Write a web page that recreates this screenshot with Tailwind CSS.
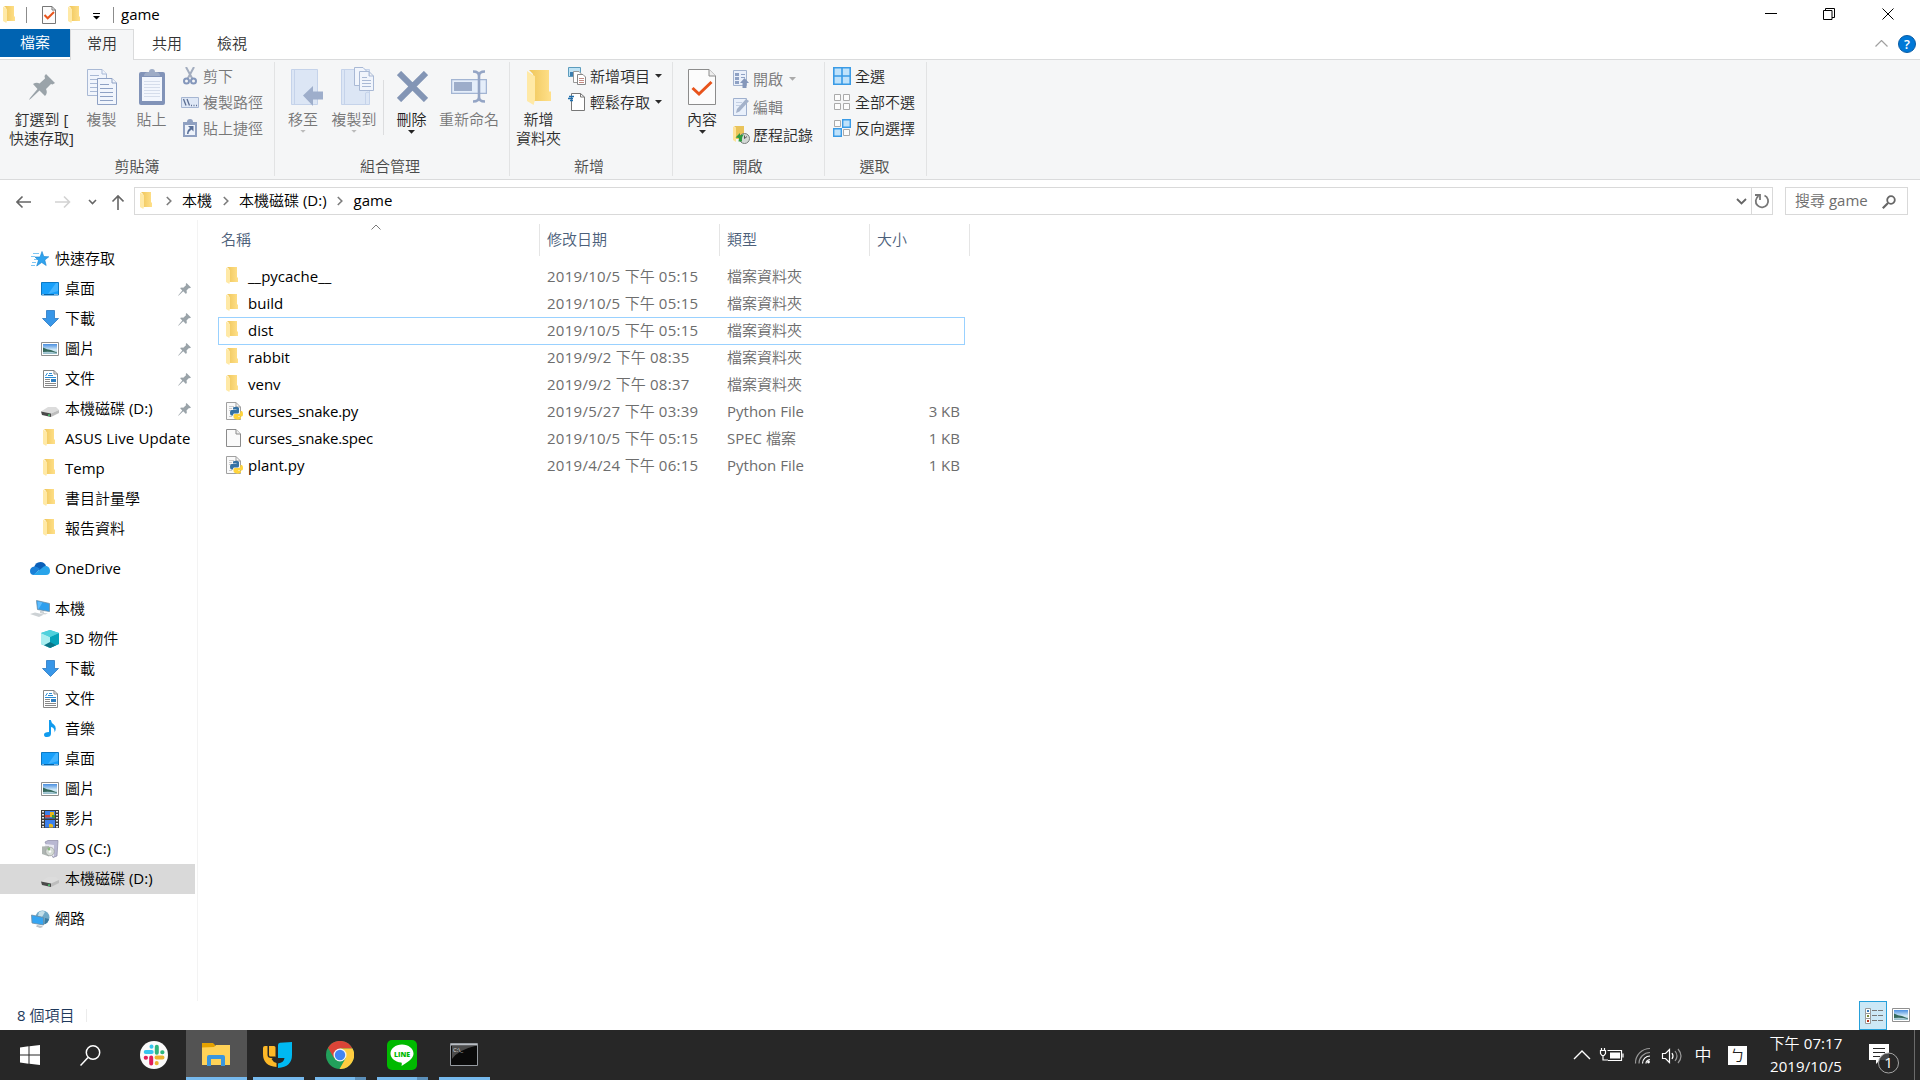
<!DOCTYPE html>
<html lang="zh-Hant">
<head>
    <meta charset="UTF-8">
    <meta name="viewport" content="width=device-width, initial-scale=1.0">
    <title>game</title>
    <script src="https://cdn.jsdelivr.net/npm/@tailwindcss/browser@4"></script>
</head>
<body class="w-[1920px] h-[1080px] overflow-hidden flex flex-col bg-white text-[15px] leading-5 text-black whitespace-nowrap font-['Open_Sans','Noto_Sans_CJK_TC_DemiLight','Noto_Sans_CJK_TC_Light','Noto_Sans_CJK_TC',sans-serif]">

    <!-- Icon sprites -->
    <svg class="absolute size-0">
        <linearGradient id="gFolder" x1="0" x2="1" y1="0" y2="0"><stop offset="0" stop-color="#efc65a"/><stop offset="1" stop-color="#ffe08a"/></linearGradient>
        <linearGradient id="gSky" x1="0" x2="0" y1="0" y2="1"><stop offset="0" stop-color="#4a8fe0"/><stop offset=".6" stop-color="#d5ecf8"/><stop offset="1" stop-color="#8fb8c4"/></linearGradient>
        <symbol id="folder" viewBox="0 0 12 17" preserveAspectRatio="none"><path fill="url(#gFolder)" d="M1 0h10v10.500h1V15H3V2z"/><path fill="#ffe9a6" d="M0 .5 4 3v11.500L3.300 17 0 15z"/></symbol>
        <symbol id="check" viewBox="0 0 28 36"><path fill="#fcfcfc" stroke="#8c8c8c" d="M.5.500h20.500l6.500 6.500v28.500H.5z"/><path fill="#eee" stroke="#8c8c8c" d="M21 .5V7h6.500"/><path fill="none" stroke="#e8541c" stroke-width="3" d="m4.500 19 6.500 6L23.500 13"/></symbol>
        <symbol id="checkSmall" viewBox="0 0 14 18"><path fill="#fcfcfc" stroke="#777" d="M.5.500H10L13.500 4v13.500H.5z"/><path fill="none" stroke="#777" d="M10 .5V4h3.500"/><path fill="none" stroke="#e8541c" stroke-width="2" d="m2.500 9 3.200 3.300L12 6"/></symbol>
        <symbol id="pin" viewBox="0 0 26 26"><path fill="#9aa3a9" d="M17 0l9 9-2.500 1.500-1.500-.5-5 5q2 4-1 7l-5.500-5.500L2 24.500 0 26l1-2 7.500-9-4.500-5q3.500-2 6.500-.5l5.500-5-.5-2.500z"/></symbol>
        <symbol id="copy" viewBox="0 0 30 36"><g fill="#f1f5fc" stroke="#a9b9d5"><path d="M.5.500H15l4.500 4.500v21.500H.5z"/><path d="M15 .5V5h4.500M3 6.500h9M3 10.500h13M3 14.500h13M3 18.500h13M3 22.500h13"/><path stroke="#8ea1c4" d="M10.500 9.500H25l4.500 4.500v21.500h-19z"/><path stroke="#8ea1c4" d="M25 9.500V14h4.500M13 15.500h9M13 19.500h13M13 23.500h13M13 27.500h13M13 31.500h13"/></g></symbol>
        <symbol id="paste" viewBox="0 0 26 36"><rect y="3" width="26" height="33" rx="2" fill="#8193b8"/><path fill="#f2f6fd" d="M3 8h20v24H3z"/><path stroke="#d5ddeb" d="M5 12.500h16M5 15.500h16M5 18.500h16M5 21.500h16M5 24.500h16M5 27.500h16"/><path fill="#9eacc6" d="M5 7q0-4 5-4 0-3 3-3t3 3q5 0 5 4z"/></symbol>
        <symbol id="cut" viewBox="0 0 14 18"><path fill="none" stroke="#a3adbf" stroke-width="2" d="M3 0 9.500 12M11 0 4.500 12"/><g fill="none" stroke="#8497bb" stroke-width="2"><circle cx="3.500" cy="14" r="2.500"/><circle cx="10.500" cy="14" r="2.500"/></g></symbol>
        <symbol id="path" viewBox="0 0 18 11"><path fill="#dfe8f6" stroke="#a6b6d2" d="M.5.500h17v10H.5z"/><path stroke="#5c6e92" stroke-width="1.300" d="m2.500 2 2.500 6.500M6 2l2.500 6.500M10 8.500h1M12.500 8.500h1M15 8.500h1"/></symbol>
        <symbol id="pasteLink" viewBox="0 0 14 18"><path fill="#8fa0c1" d="M0 3h4q0-3 3-3t3 3h4v15H0z"/><path fill="#eef3fb" d="M2 6h10v10H2z"/><path fill="#5a7099" d="M5 7h5.500v5.500l-2-2q-3 2-3 4.500h-1.500q0-4 3-6z"/></symbol>
        <symbol id="moveTo" viewBox="0 0 32 37"><path fill="#dce6f5" stroke="#c5d3ea" d="M.5.500h26v35H.5z"/><path stroke="#c5d3ea" d="M3.500 1v35"/><path fill="#9eaecb" d="M12 26.500 22 17v5.500h10v8H22V37z"/></symbol>
        <symbol id="copyTo" viewBox="0 0 33 38"><path fill="#dce6f5" stroke="#c5d3ea" d="M.5 2.500h28v35H.5z"/><path fill="none" stroke="#c5d3ea" d="M3.500 3v34M24.500 37V26q3-2 4 0"/><g fill="#f1f5fc" stroke="#a9b9d5"><path d="M13.500.500H22l4 4v14H13.500z"/><path d="M18.500 4.500H28l4.500 4.500v14.500h-14zM28 4.500V9h4.500M21 10.500h5M21 13.500h9M21 16.500h9M21 19.500h9"/></g></symbol>
        <symbol id="delete" viewBox="0 0 31 31"><path stroke="#8395b5" stroke-width="6" d="m2 2 27 27M29 2 2 29"/></symbol>
        <symbol id="rename" viewBox="0 0 36 33"><path fill="#e5eefa" stroke="#a3b5d3" stroke-width="1.300" d="M.6 9.600h34.800v13.800H.6z"/><path fill="#9dadca" d="M3 12h18v9H3z"/><path fill="none" stroke="#94a5c5" stroke-width="2.600" d="M22 1.500q6 0 6 4.500v21q0 4.500-6 4.500M34 1.500q-6 0-6 4.500v21q0 4.500 6 4.500"/></symbol>
        <symbol id="newItem" viewBox="0 0 18 18"><path fill="#bfe3f5" stroke="#5c9cbd" d="M.5.500h12v9H.5z"/><path fill="#3c7fb0" d="M2 5h5v4H2z"/><path fill="#fff" stroke="#999" d="M5.500 4.500H11l2 2v9H5.500z"/><path fill="#fff" stroke="#888" d="M9.500 7.500H15l2.500 2.500v7.500h-8z"/><path stroke="#c38b83" d="M11 11.500h5M11 13.500h5M11 15.500h5"/></symbol>
        <symbol id="easyAccess" viewBox="0 0 17 18"><path fill="#fff" stroke="#777" d="M3.500.500h9L16.500 4v13.500h-13z"/><path fill="none" stroke="#777" d="M12.500.500V4h4"/><path fill="none" stroke="#1e6fae" stroke-width="1.300" d="M1 3.500h5M0 5.500h5M2 7.500h3"/></symbol>
        <symbol id="open" viewBox="0 0 16 18"><path fill="#eaf0fa" stroke="#a3b3ce" d="M.5.500h13v15H.5z"/><path fill="#8ea1c4" d="M2 3h4v3H2zM2 7h4v3H2zM2 11h4v3H2zM8 4h4v1H8zM8 7h4v1H8z"/><path fill="#8597ba" d="m11.500 8 4.500 5h-2.500v5h-4v-5H7z"/></symbol>
        <symbol id="edit" viewBox="0 0 16 18"><path fill="#e9f0fb" stroke="#9fb0ce" d="M.5.500h13v17H.5z"/><path fill="#a4b2ca" d="M3 15 4 11 13 1l3 2L6.500 13.500z"/><path stroke="#c3cfe3" d="M3 4.500h6M3 7.500h4"/></symbol>
        <symbol id="history" viewBox="0 0 17 18"><path fill="#e9c35a" d="M1 0h10v13H3V2z"/><path fill="#ffe398" d="M0 .5 3 2v14l-3-2z"/><circle cx="11.500" cy="12.500" r="5" fill="#d3d8d5" stroke="#777d7b"/><path fill="none" stroke="#555" d="M11.500 9.500v3l2.500-2"/><path fill="#2e9c3f" d="M2.500 11.500 7 7v2.500q2.500-1.500 4-1-2.500 2-2 7H5.500l.5-3.500z"/></symbol>
        <symbol id="selAll" viewBox="0 0 18 18"><path fill="#bfe2fb" stroke="#3a9be6" stroke-width="1.600" d="M.8.800h16.400v16.400H.8zM9 1v16M1 9h16"/></symbol>
        <symbol id="selNone" viewBox="0 0 18 18"><path fill="#fcfcfc" stroke="#aaa" d="M1.500 1.500h6v6h-6zM10.500 1.500h6v6h-6zM1.500 10.500h6v6h-6zM10.500 10.500h6v6h-6z"/></symbol>
        <symbol id="selInv" viewBox="0 0 18 18"><path fill="#fcfcfc" stroke="#aaa" d="M1.500 1.500h6v6h-6zM10.500 10.500h6v6h-6z"/><path fill="#bfe2fb" stroke="#3a9be6" stroke-width="1.400" d="M9.700.700h7.600v7.600H9.700zM.7 9.700h7.600v7.600H.7z"/></symbol>
        <symbol id="star" viewBox="0 0 18 16"><path stroke="#7ec6f3" d="M2 2.500h6M0 5.500h4M3 8.500h3M1 11.500h4M0 14.500h4"/><path fill="#2fa3ee" stroke="#1a83cf" stroke-width=".6" d="m11 .5 1.800 5 5 .3-4 3.200 1.400 5.500-4.500-3-5 3.500 1.700-5.500L4 6h5z"/></symbol>
        <symbol id="desktop" viewBox="0 0 18 14"><path fill="#18a0fb" stroke="#0b79c5" d="M.5.500h17v12.500H.5z"/><path fill="#43b4ff" d="M17 1v8L7 12 15 1z"/><path stroke="#0763a5" d="M1 12.500h16"/><path stroke="#fff" d="M1.500 12.500h1M13.500 12.500h1M15.500 12.500h1"/></symbol>
        <symbol id="down" viewBox="0 0 17 17"><path fill="#3796e8" stroke="#2a78c2" stroke-width=".8" d="M4.500.500h8v8h4L8.500 16.500.5 8.500h4z"/></symbol>
        <symbol id="picture" viewBox="0 0 18 14"><path fill="#fff" stroke="#8f8f8f" d="M.5.500h17v13H.5z"/><path fill="url(#gSky)" d="M2 2h14v10H2z"/><path fill="#35695d" d="M2 5.500q4 2 8 2.500 3 1 6 2.500v.5q-7-2-14-1z"/></symbol>
        <symbol id="doc" viewBox="0 0 15 18"><path fill="#fff" stroke="#878787" d="M.5.500H11L14.500 4v13.500H.5z"/><path fill="none" stroke="#878787" d="M11 .5V4h3.500"/><path stroke="#2a8bd3" d="M4.500 3 2.500 6M6 3.500h3M5 5.500h5M2 7.500h11"/><path stroke="#888" d="M2 9.500h5M2 11.500h5M2 13.500h11M2 15.500h11"/><path fill="#2e7fc0" d="M8 9h5v3H8z"/></symbol>
        <symbol id="drive" viewBox="0 0 18 10"><path fill="#dcdcdc" d="M0 4.500 7 0h8l3 3-8 3.500z"/><path fill="#4a4a4a" d="M0 4.500 10 6.500V10L1 8z"/><path fill="#bdbdbd" d="M10 6.500 18 3v3l-8 4z"/><path fill="#4be07a" d="M7 7.500h2v1.300H7z"/></symbol>
        <symbol id="cloud" viewBox="0 0 20 13"><path fill="#0a5fb8" d="M4 6q1-6 6.500-6 4 0 5.500 4l-6 5z"/><path fill="#1a7fd6" d="M0 9q0-4 4.500-4.500Q7 4 10 7l-6 6Q0 13 0 9z"/><path fill="#28a4ea" d="m3 13 9-7q2-2.500 4.500-2 3.500 1 3.500 5 0 4-4 4z"/></symbol>
        <symbol id="pc" viewBox="0 0 20 17"><path fill="#2d9fee" stroke="#6d8da3" stroke-width=".8" d="m6.500.5 13 3v8l-12-2z"/><path fill="#5bbcff" d="m7.500 1.500 5 1-4 6.500-.5-.2z"/><path fill="#cdd2d5" d="m0 14 5-1.500 9 2L9 17zM10 10.500l4 1v1.500l4 .5-3 1-5-1.500z"/></symbol>
        <symbol id="cube" viewBox="0 0 18 18"><path fill="#3cc6d8" d="m9 0 9 3v11l-9 4-9-4V3z"/><path fill="#a9eef0" d="m0 3 9 4v11l-9-4z"/><path fill="#07a3b9" d="m18 3-9 4v11l9-4z"/><path fill="#4fd1dc" d="m9 0 9 3-9 4-9-4z"/><path fill="#0b7587" d="m9 12 6 3.300L9 18l-6-2.700z"/></symbol>
        <symbol id="music" viewBox="0 0 12 18"><path fill="#119bee" d="M5 0h1.800q.5 3 3 4.500 3.500 3 .7 8 .5-4.500-3.500-5.500v6.500q0 3.500-4 3.500-3 0-3-2.300Q0 12 5 12z"/></symbol>
        <symbol id="film" viewBox="0 0 18 18"><path fill="#3b3b3b" d="M0 0h18v18H0z"/><path stroke="#e8e8e8" stroke-width="2" stroke-dasharray="1.500 1.500" d="M2 1v17M16 1v17"/><path fill="#3c80ec" d="M4 1h10v7.500H4zM4 10h10v7.500H4z"/><path fill="#e9b91a" d="M9 2h4v5H9zM8 14q2-1 4 1v2.500H8z"/><path fill="#d2463a" d="M4 5h5v2.500H4z"/><path fill="#3f9440" d="M11 5h3v3h-3z"/></symbol>
        <symbol id="osdisk" viewBox="0 0 17 18"><path fill="#b9b8d2" stroke="#8b8aa5" stroke-width=".7" d="M3 2 6 .5h10l-1 15.500-4 1.500z"/><path fill="#e9e9f3" d="m3 4 9 1v11.500L3 14z"/><path fill="#aeb5b2" d="M0 6.500 7 6v10.500L0 14z"/><circle cx="8" cy="11.500" r="4.300" fill="#d5dcd6" stroke="#999" stroke-width=".7"/><path fill="#86b77b" d="M8 11.500 5 9q2-2 3-1.800z"/><circle cx="8" cy="11.500" r="1.200" fill="#fff"/></symbol>
        <symbol id="network" viewBox="0 0 19 18"><circle cx="11.500" cy="7.500" r="7" fill="#6fa9c7"/><path fill="#c3dfe9" d="M8 2q4-2 6 0l-3 5-4-1z"/><path fill="#3b7ba0" d="m14 8 4 1q-1 4-4.500 5.500z"/><path fill="#35a5f2" stroke="#6d8da3" stroke-width=".8" d="m.5 5 12 2.500v7.500L1 13z"/><path fill="#bcc3c8" d="m6 15 5 1 1 1-3 1-4-1.500z"/></symbol>
        <symbol id="file" viewBox="0 0 15 18"><path fill="#fafafa" stroke="#8b8b8b" d="M.5.500H10L14.500 5v12.500H.5z"/><path fill="#eee" stroke="#8b8b8b" d="M10 .5V5h4.500"/></symbol>
        <symbol id="py" viewBox="0 0 17 18"><path fill="#fafafa" stroke="#a0a0a0" d="M.5.500H10L14.500 5v12.500H.5z"/><path fill="none" stroke="#a0a0a0" d="M10 .5V5h4.500"/><path stroke="#ccc" d="M3 4.500h5M3 6.500h3M3 8.500h2M3 14.500h3"/><path fill="#3672a4" d="M7 5.500q4-1.500 6 .5v4q0 1.500-1.500 1.500H8q-1 0-1 2H5.500q-1.500 0-1.500-3T6 8h4.500v-.5H7z"/><path fill="#ffd43b" d="M14.500 9H16q1 1 1 3t-1 2.500h-4v.5h3v1.500q-2 2-6 .5-1.500-.5-1.500-2V13q.5-1 1.500-1h3.500q2 0 2-2z"/></symbol>
        <symbol id="caret" viewBox="0 0 7 4"><path fill="currentColor" d="M0 0h7L3.500 3.700z"/></symbol>
        <symbol id="chev" viewBox="0 0 6 10"><path fill="none" stroke="#7d7d7d" stroke-width="1.600" d="m.8 1 4 4-4 4"/></symbol>
    </svg>

    <!-- Title bar -->
    <header class="h-[29px] flex items-start justify-between shrink-0">
        <div class="flex h-[29px] items-center pl-[3px]">
            <svg class="w-3 h-[17px] -mt-px"><use href="#folder"/></svg>
            <i class="w-px h-4 bg-[#8c8c8c] ml-[11px]"></i>
            <svg class="w-[14px] h-[18px] ml-[15px]"><use href="#checkSmall"/></svg>
            <svg class="w-3 h-[17px] ml-3"><use href="#folder"/></svg>
            <svg class="w-[7px] h-[7px] ml-[13px] mt-[3px]" viewBox="0 0 7 7"><path d="M0 0h7v1H0zM0 3h7L3.500 6.500z"/></svg>
            <i class="w-px h-4 bg-[#8c8c8c] ml-[13px]"></i>
            <span class="ml-[7px] pb-0.5">game</span>
        </div>
        <svg class="w-[145px] h-[29px] mr-[10px]" viewBox="0 0 145 29" fill="none" stroke="#000"><path d="M0 13.500h12M58.500 10.500h8.500v9h-8.500zM60.500 10V8.500h9v9H67M117.500 8.500l11 11M128.500 8.500l-11 11"/></svg>
    </header>

    <!-- Ribbon tabs -->
    <nav class="h-[30px] flex shrink-0 text-[#333]">
        <div class="w-[70px] h-7 bg-[#0063b1] text-white text-center leading-[27px]">檔案</div>
        <div class="w-16 h-[31px] relative border border-b-0 border-[#dadbdc] bg-[#f5f6f7] text-center leading-[26px]">常用</div>
        <div class="w-[66px] text-center leading-7">共用</div>
        <div class="w-[64px] text-center leading-7">檢視</div>
        <div class="ml-auto flex items-center mr-1 -mt-px">
            <svg class="w-[13px] h-[7px] mr-[10px]" viewBox="0 0 13 7"><path fill="none" stroke="#a0a0a0" stroke-width="1.200" d="M.5 6.500l6-6 6 6"/></svg>
            <span class="size-[18px] rounded-full bg-[#0078d7] border border-[#0a5ca5] text-white text-[13px] font-semibold leading-4 text-center">?</span>
        </div>
    </nav>

    <!-- Ribbon -->
    <section class="h-[121px] shrink-0 flex bg-[#f5f6f7] border-y border-[#dadbdc] text-[#2b2b2b] leading-[19px] pb-[3px] pt-0.5">
        <div class="w-[275px] border-r border-[#e2e3e4] flex flex-col">
            <div class="flex h-[95px] pt-[7px]">
                <div class="w-[81px] flex flex-col items-center text-center">
                    <div class="h-9 flex items-center pl-[3px]"><svg class="size-[26px]"><use href="#pin"/></svg></div>
                    <div class="mt-[5px] pl-0.5">釘選到 [<br>快速存取]</div>
                </div>
                <div class="w-[41px] flex flex-col items-center text-[#777]"><svg class="w-[30px] h-9"><use href="#copy"/></svg><div class="mt-[5px]">複製</div></div>
                <div class="w-[59px] flex flex-col items-center text-[#777]"><svg class="w-[26px] h-9"><use href="#paste"/></svg><div class="mt-[5px]">貼上</div></div>
                <div class="-mt-[6px] text-[#777] flex flex-col">
                    <div class="flex items-center h-[26px]"><svg class="w-[14px] h-[18px] ml-0.5 mr-[6px]"><use href="#cut"/></svg>剪下</div>
                    <div class="flex items-center h-[26px]"><svg class="w-[18px] h-[11px] mr-1"><use href="#path"/></svg>複製路徑</div>
                    <div class="flex items-center h-[26px]"><svg class="w-[14px] h-[18px] ml-0.5 mr-[6px]"><use href="#pasteLink"/></svg>貼上捷徑</div>
                </div>
            </div>
            <div class="text-center text-[#4b4b4b]">剪貼簿</div>
        </div>

        <div class="w-[235px] border-r border-[#e2e3e4] flex flex-col">
            <div class="flex h-[95px] pt-[7px] pl-2 text-[#777]">
                <div class="w-10 flex flex-col items-center"><svg class="w-8 h-[37px] ml-2"><use href="#moveTo"/></svg><div class="mt-1">移至</div><svg class="w-[6px] h-[3px] mt-px text-[#bbb]"><use href="#caret"/></svg></div>
                <div class="w-[60px] flex flex-col items-center pl-0.5"><svg class="w-[33px] h-[38px] -mt-0.5 ml-[6px]"><use href="#copyTo"/></svg><div class="mt-[5px]">複製到</div><svg class="w-[6px] h-[3px] mt-px text-[#bbb]"><use href="#caret"/></svg></div>
                <i class="w-px h-[55px] bg-[#dcdddf] mt-[11px]"></i>
                <div class="w-[55px] flex flex-col items-center text-[#222]"><svg class="size-[31px] mt-0.5 ml-0.5"><use href="#delete"/></svg><div class="mt-2">刪除</div><svg class="w-[7px] h-[4px] mt-px"><use href="#caret"/></svg></div>
                <div class="w-[60px] flex flex-col items-center"><svg class="w-9 h-[33px] mt-px"><use href="#rename"/></svg><div class="mt-[7px]">重新命名</div></div>
            </div>
            <div class="text-center text-[#4b4b4b] pr-1">組合管理</div>
        </div>

        <div class="w-[163px] border-r border-[#e2e3e4] flex flex-col">
            <div class="flex h-[95px] pt-[7px]">
                <div class="w-[57px] flex flex-col items-center text-center"><svg class="w-6 h-[35px] mt-px"><use href="#folder"/></svg><div class="mt-[5px]">新增<br>資料夾</div></div>
                <div class="-mt-[6px] ml-px">
                    <div class="flex items-center h-[26px]"><svg class="size-[18px] mr-1"><use href="#newItem"/></svg>新增項目<svg class="w-[7px] h-[4px] ml-[5px]"><use href="#caret"/></svg></div>
                    <div class="flex items-center h-[26px]"><svg class="w-[17px] h-[18px] mr-[5px]"><use href="#easyAccess"/></svg>輕鬆存取<svg class="w-[7px] h-[4px] ml-[5px]"><use href="#caret"/></svg></div>
                </div>
            </div>
            <div class="text-center text-[#4b4b4b] pr-1">新增</div>
        </div>

        <div class="w-[152px] border-r border-[#e2e3e4] flex flex-col">
            <div class="flex h-[95px] pt-[7px]">
                <div class="w-[58px] flex flex-col items-center"><svg class="w-7 h-9"><use href="#check"/></svg><div class="mt-[5px]">內容</div><svg class="w-[7px] h-[4px] mt-px"><use href="#caret"/></svg></div>
                <div class="-mt-1 ml-0.5">
                    <div class="flex items-center h-7 text-[#777]"><svg class="w-4 h-[18px] mr-1"><use href="#open"/></svg>開啟<svg class="w-[7px] h-[4px] ml-[6px] text-[#aaa]"><use href="#caret"/></svg></div>
                    <div class="flex items-center h-7 text-[#777]"><svg class="w-4 h-[18px] mr-1"><use href="#edit"/></svg>編輯</div>
                    <div class="flex items-center h-7"><svg class="w-[17px] h-[18px] mr-[3px]"><use href="#history"/></svg>歷程記錄</div>
                </div>
            </div>
            <div class="text-center text-[#4b4b4b] pr-0.5">開啟</div>
        </div>

        <div class="w-[102px] border-r border-[#e2e3e4] flex flex-col">
            <div class="h-[95px] pl-2 pt-px">
                <div class="flex items-center h-[26px]"><svg class="size-[18px] mr-1"><use href="#selAll"/></svg>全選</div>
                <div class="flex items-center h-[26px]"><svg class="size-[18px] mr-1"><use href="#selNone"/></svg>全部不選</div>
                <div class="flex items-center h-[26px]"><svg class="size-[18px] mr-1"><use href="#selInv"/></svg>反向選擇</div>
            </div>
            <div class="text-center text-[#4b4b4b] pr-0.5">選取</div>
        </div>
    </section>

    <!-- Address bar -->
    <section class="h-10 shrink-0 flex items-center pl-4 pr-3 pt-0.5">
        <svg class="w-[108px] h-5 mr-[10px] mt-0.5" viewBox="0 0 108 20" fill="none" stroke="#666" stroke-width="1.600"><path d="M1 10h14M6.500 4.500 1 10l5.500 5.500"/><path stroke="#d2d2d2" d="M39 10h14M48 4.500l5.500 5.500-5.500 5.500"/><path d="m73 8 3.500 3.500L80 8M102 18V4M96.500 9.500 102 4l5.500 5.500"/></svg>
        <div class="w-[1639px] h-7 flex items-center border border-[#d9d9d9] pl-[5px]">
            <svg class="w-3 h-[17px] -mt-0.5"><use href="#folder"/></svg>
            <svg class="w-[6px] h-[10px] ml-[14px]"><use href="#chev"/></svg><span class="ml-[10px] pb-0.5">本機</span>
            <svg class="w-[6px] h-[10px] ml-[11px]"><use href="#chev"/></svg><span class="ml-[10px] pb-0.5">本機磁碟 (D:)</span>
            <svg class="w-[6px] h-[10px] ml-[10px]"><use href="#chev"/></svg><span class="ml-[11px] pb-0.5">game</span>
            <svg class="w-[11px] h-[7px] ml-auto mr-1" viewBox="0 0 11 7"><path fill="none" stroke="#666" stroke-width="1.800" d="m1 1 4.500 4.500L10 1"/></svg>
            <div class="w-[21px] h-[26px] border-l border-[#d9d9d9] flex items-center justify-center">
                <svg class="size-4" viewBox="0 0 16 16" fill="none" stroke="#777" stroke-width="1.800"><path d="M10.500 2.500a6.200 6.200 0 1 1-6 .5M1 2h5v5"/></svg>
            </div>
        </div>
        <div class="ml-3 w-[123px] h-7 flex items-center border border-[#d9d9d9] pl-[9px] text-[#6d6d6d]">
            <span class="pb-0.5">搜尋 game</span>
            <svg class="size-[14px] ml-auto mr-[11px] mt-px" viewBox="0 0 14 14" fill="none" stroke="#666"><circle cx="9" cy="5" r="3.800" stroke-width="1.800"/><path stroke-width="2.200" d="M6 8 .8 13.200"/></svg>
        </div>
    </section>

    <main class="flex h-[781px] shrink-0">
        <aside id="tree" class="w-[198px] border-r border-[#f3f3f3] pt-6 shrink-0"></aside>
        <div class="pl-5 pt-1">
            <div class="w-[752px] grid grid-cols-[322px_180px_150px_100px] text-[#4c607a] h-8 leading-[30px] relative">
                <div class="pl-[3px] border-r border-[#e5e5e5]">名稱</div>
                <div class="pl-[7px] border-r border-[#e5e5e5]">修改日期</div>
                <div class="pl-[7px] border-r border-[#e5e5e5]">類型</div>
                <div class="pl-[7px] border-r border-[#e5e5e5]">大小</div>
                <svg class="absolute left-[153px] top-0 w-[10px] h-[6px]" viewBox="0 0 10 6"><path fill="none" stroke="#7a7a7a" d="m.5 5.500 4.500-4.500 4.500 4.500"/></svg>
            </div>
            <div id="files" class="pt-[7px]"></div>
        </div>
    </main>

    <!-- Status bar -->
    <footer class="h-[29px] shrink-0 flex items-center pl-[17px] text-[#1e395b]">
        <span class="pb-0.5">8 個項目</span>
        <i class="w-px h-[13px] bg-[#ececec] ml-3"></i>
        <div class="ml-auto w-7 h-[29px] bg-[#cce8f6] border border-[#26a0da] flex items-center justify-center pl-0.5">
            <svg class="w-[18px] h-4" viewBox="0 0 18 16"><path fill="#fff" stroke="#999" d="M.5.500h5v5h-5zM.5 5.500h5v5h-5zM.5 10.500h5v5h-5z"/><path fill="#3a78b8" d="M2 2h2v2H2z"/><path fill="#7a8a3a" d="M2 7h2v2H2z"/><path fill="#b8341c" d="M2 12h2v2H2z"/><path stroke="#777" d="M7 2.500h5M13 2.500h5M7 7.500h5M13 7.500h5M7 12.500h5M13 12.500h5"/></svg>
        </div>
        <svg class="w-[18px] h-[14px] ml-[5px] mr-[10px] -mt-0.5"><use href="#picture"/></svg>
    </footer>

    <!-- Taskbar -->
    <footer class="h-[50px] shrink-0 flex bg-[#272727] text-white">
        <div class="w-[62px] flex items-center justify-center"><svg class="size-5 ml-[-2px]" viewBox="0 0 20 20"><path fill="#fff" d="M0 2.500 8.500 1.300V9.500H0zM9.500 1.200 20 0v9.500H9.500zM0 10.500h8.500v8.200L0 17.500zM9.500 10.500H20V20L9.500 18.800z"/></svg></div>
        <div class="w-[62px] flex items-center justify-center"><svg class="size-[21px] ml-[-6px]" viewBox="0 0 21 21" fill="none" stroke="#fff" stroke-width="1.500"><circle cx="13" cy="7.500" r="6.700"/><path d="M8 12.500.5 20.500"/></svg></div>
        <div class="w-[62px] flex items-center justify-center">
            <svg class="size-7 -ml-0.5" viewBox="0 0 28 28"><circle cx="14" cy="14" r="14" fill="#fafafa"/><g stroke-width="4" stroke-linecap="round"><path stroke="#36c5f0" d="M5.700 11h6M11.500 5.500v.3"/><path stroke="#2eb67d" d="M16.800 5.700v6M22.200 11.200h.3"/><path stroke="#ecb22e" d="M16.500 16.500h6M16.700 22v.3"/><path stroke="#e01e5a" d="M11.200 16.500v6M5.700 16.700h.3"/></g></svg>
        </div>
        <div class="w-[61px] bg-[#535353] border-b-[3px] border-[#76b9ed] flex items-center justify-center pr-0.5">
            <svg class="w-7 h-[23px] mt-px" viewBox="0 0 28 23"><path fill="#e5a200" d="M0 0h11l2 2v3H0z"/><path fill="#ffd257" d="M0 4.500 12 4l2-2h14v20H0z"/><path fill="#3a96dd" d="M5 14q0-2 2-2h14q2 0 2 2v9h-4v-7H9v7H5z"/></svg>
        </div>
        <div class="w-[51px] ml-[6px] border-b-[3px] border-[#76b9ed] flex items-center justify-center pr-0.5">
            <svg class="w-[29px] h-[26px] mt-0.5" viewBox="0 0 29 26"><path fill="#fdb827" d="M2 4h9q1.500 0 1.500 1.500V15q-3.500 1-4 2 1.500 3 5 4v4Q0 24 0 12V6q0-2 2-2z"/><path fill="#272727" d="M4.500 4H6v9q0 1.500 1.500 1.500h5V16H8q-3.500 0-3.500-3z"/><path fill="#00b9f2" d="M15 3q0-2 2-2.200L29 0v13q0 12-14 13v-4.500q6-1 6.500-5.500H15z"/></svg>
        </div>
        <div class="w-[51px] ml-[11px] flex flex-col">
            <div class="h-[47px] flex items-center justify-center pr-0.5">
                <svg class="size-7 mt-0.5" viewBox="0 0 28 28"><circle cx="14" cy="14" r="14" fill="#22a05b"/><path fill="#db4437" d="M2 6.800a14 14 0 0 1 24.500.7H14L8 17z"/><path fill="#ffcd40" d="M14 7.500h12.500A14 14 0 0 1 13.500 28l6-10.500z"/><circle cx="14" cy="14" r="6.500" fill="#f4f4f4"/><circle cx="14" cy="14" r="5.200" fill="#4285f4"/></svg>
            </div>
            <div class="h-[3px] bg-[#5b8fb9] border-l-[40px] border-[#76b9ed]"></div>
        </div>
        <div class="w-[51px] ml-[11px] flex flex-col">
            <div class="h-[47px] flex items-center justify-center pr-0.5">
                <svg class="size-[30px] mt-[3px]" viewBox="0 0 30 30"><rect width="30" height="30" rx="5" fill="#00b900"/><path fill="#fff" d="M15 4.500c6.500 0 11.500 4 11.500 9 0 4-3 7-12 12.500.5-2 .5-3.500-.5-3.500C8 22 3.500 18 3.500 13.500c0-5 5-9 11.500-9z"/><text x="15" y="16.500" text-anchor="middle" font-size="7" font-weight="800" fill="#00b900">LINE</text></svg>
            </div>
            <div class="h-[3px] bg-[#5b8fb9] border-l-[40px] border-[#76b9ed]"></div>
        </div>
        <div class="w-[51px] ml-[11px] border-b-[3px] border-[#76b9ed] flex items-center justify-center pr-0.5">
            <svg class="w-7 h-[23px] mt-px" viewBox="0 0 28 23"><path fill="#0a0a0a" stroke="#969ba1" d="M.5.500h27v22H.5z"/><path fill="#b9bdc2" d="M1 1h26v1.500H1z"/><path fill="#4b4b4b" d="M2 3h23Q8 7 2 16z"/><text x="3" y="9" font-size="6" fill="#ddd">C:\_</text></svg>
        </div>

        <div class="ml-auto flex items-center">
            <svg class="w-[114px] h-6 mr-[11px] mt-0.5" viewBox="0 0 114 24" fill="none" stroke="#fff" stroke-width="1.200">
                <path d="m5 15 8-8 8 8" stroke-width="1.400"/>
                <path d="M38.500 6.500h14v10H39M54 9.500v4"/><path fill="#fff" stroke="none" d="M41 8.500h10v6H41z"/><path fill="#272727" d="M35.500 4v3M32.500 4v3M31.500 6.500h5v3l-1.500 2h-2l-1.500-2zM34 11.500v4.500h5"/>
                <path stroke="#999" d="M66.500 19.500A14.500 14.500 0 0 1 81 4.500M70 19.500A11 11 0 0 1 81 8.500"/><path d="M73.500 19.500a7.500 7.500 0 0 1 7.500-7.500M77 19.500q0-3.500 4-4"/><circle cx="79.500" cy="18" r="1.400" fill="#fff" stroke="none"/>
                <path d="M93.500 9.500h3l4-4v13l-4-4h-3zM103 9q2 3 0 6"/><path stroke="#999" d="M106 7q4 5 0 10M109 5q6 7 0 14"/>
            </svg>
            <span class="w-[18px] text-[17px] text-center">中</span>
            <span class="ml-4 size-[19px] bg-white text-[#222] text-[15px] leading-[19px] text-center">ㄅ</span>
            <div class="w-[90px] ml-[14px] text-center leading-[23px] tracking-[0.1px] pb-px">下午 07:17<br>2019/10/5</div>
            <svg class="w-8 h-[34px] ml-[17px] mt-[6px]" viewBox="0 0 32 34"><path fill="#fff" d="M1 3h20v16h-9l-4 4v-4H1z"/><path stroke="#272727" stroke-width="1.200" d="M5 7.500h12M5 11.500h12M5 15.500h7"/><circle cx="20.500" cy="22" r="10" fill="#272727" fill-opacity=".85" stroke="#a5a5a5"/><text x="20.500" y="27" text-anchor="middle" font-size="15" fill="#fff">1</text></svg>
            <i class="w-px h-[50px] bg-[#6a6a6a] ml-[14px] mr-[5px]"></i>
        </div>
    </footer>

    <script>
        // wraps each Latin run so its letter spacing can differ from the Chinese text
        const mix = (s, cls = '') => s.replace(/[\x20-\x7e]+/g, m => `<span class="${cls}">${m}</span>`);

        // [icon, label, depth, pinned, gap before, selected]
        const tree = [
            ['star', '快速存取', 0],
            ['desktop', '桌面', 1, 1], ['down', '下載', 1, 1], ['picture', '圖片', 1, 1], ['doc', '文件', 1, 1],
            ['drive', '本機磁碟 (D:)', 1, 1], ['folder', 'ASUS Live Update', 1], ['folder', 'Temp', 1],
            ['folder', '書目計量學', 1], ['folder', '報告資料', 1],
            ['cloud', 'OneDrive', 0, 0, 1],
            ['pc', '本機', 0, 0, 1],
            ['cube', '3D 物件', 1], ['down', '下載', 1], ['doc', '文件', 1], ['music', '音樂', 1], ['desktop', '桌面', 1],
            ['picture', '圖片', 1], ['film', '影片', 1], ['osdisk', 'OS (C:)', 1], ['drive', '本機磁碟 (D:)', 1, 0, 0, 1],
            ['network', '網路', 0, 0, 1],
        ];
        const size = {
            star: 'w-[18px] h-4', desktop: 'w-[18px] h-[14px]', down: 'size-[17px]', picture: 'w-[18px] h-[14px]',
            doc: 'w-[15px] h-[18px]', drive: 'w-[18px] h-[10px] mt-[7px]', folder: 'w-3 h-[17px] -mt-0.5 -ml-0.5',
            cloud: 'w-5 h-[13px]', pc: 'w-5 h-[17px]', cube: 'size-[18px]', music: 'w-3 h-[18px]', film: 'size-[18px]',
            osdisk: 'w-[17px] h-[18px]', network: 'w-[19px] h-[18px]', file: 'w-[15px] h-[18px] mr-px', py: 'w-[17px] h-[18px]',
        };
        document.getElementById('tree').innerHTML = tree.map(([icon, label, depth, pinned, gap, sel]) => `
            <div class="flex items-center h-[30px] w-[195px] pb-0.5 ${gap ? 'mt-[10px]' : ''} ${depth ? 'pl-10' : 'pl-[30px]'} ${sel ? 'bg-[#d9d9d9]' : ''}">
                <div class="w-5 flex justify-center shrink-0 mt-px"><svg class="${size[icon]}"><use href="#${icon}"/></svg></div>
                <span class="ml-[5px]">${mix(label, label[0] === 'A' ? 'tracking-[0.12px]' : '')}</span>
                ${pinned ? '<svg class="size-[13px] ml-auto mr-1 mt-0.5"><use href="#pin"/></svg>' : ''}
            </div>`).join('');

        const files = [
            ['folder', '__pycache__', '2019/10/5 下午 05:15', '檔案資料夾', ''],
            ['folder', 'build', '2019/10/5 下午 05:15', '檔案資料夾', ''],
            ['folder', 'dist', '2019/10/5 下午 05:15', '檔案資料夾', ''],
            ['folder', 'rabbit', '2019/9/2 下午 08:35', '檔案資料夾', ''],
            ['folder', 'venv', '2019/9/2 下午 08:37', '檔案資料夾', ''],
            ['py', 'curses_snake.py', '2019/5/27 下午 03:39', 'Python File', '3 KB'],
            ['file', 'curses_snake.spec', '2019/10/5 下午 05:15', 'SPEC 檔案', '1 KB'],
            ['py', 'plant.py', '2019/4/24 下午 06:15', 'Python File', '1 KB'],
        ];
        document.getElementById('files').innerHTML = files.map(([icon, name, date, type, kb]) => `
            <div class="grid grid-cols-[328px_180px_145px_88px] w-[747px] h-7 -mb-px pb-0.5 items-center border pl-px pr-1 ${name === 'dist' ? 'border-[#99d1ff]' : 'border-transparent'} text-[#6d6d6d]">
                <div class="flex items-center text-black"><div class="w-[17px] ml-[6px] mr-[5px] flex ${icon === 'folder' ? 'pl-0.5' : ''}"><svg class="${size[icon]}"><use href="#${icon}"/></svg></div>${mix(name, name[0] === 'c' ? 'tracking-[-0.22px]' : '')}</div>
                <div class="-ml-px">${mix(date, 'tracking-[0.27px]')}</div>
                <div class="-ml-px">${mix(type)}</div>
                <div class="text-right -ml-px mr-px">${mix(kb)}</div>
            </div>`).join('');
    </script>
</body>
</html>
